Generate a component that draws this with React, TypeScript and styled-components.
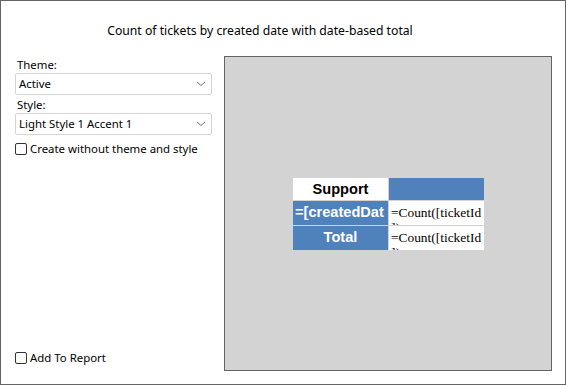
import styled, { createGlobalStyle } from 'styled-components';

const GlobalStyle = createGlobalStyle`
  html, body {
    margin: 0;
    padding: 0;
    background: #ffffff;
  }
  * {
    box-sizing: border-box;
  }
`;

const Frame = styled.div`
  width: 566px;
  height: 385px;
  border: 1px solid #646464;
  background: #ffffff;
  display: flex;
  flex-direction: column;
  font-family: "Noto Sans", "Open Sans", sans-serif;
  color: #000000;
`;

const Title = styled.div`
  height: 55px;
  padding: 21px 46px 0 0;
  text-align: center;
  font-size: 12.2px;
  line-height: 18px;
`;

const Body = styled.div`
  flex: 1;
  display: grid;
  grid-template-columns: 198px 328px;
  column-gap: 12px;
  padding: 0 13px 13px 13px;
`;

const Options = styled.div`
  display: flex;
  flex-direction: column;
  font-size: 11.4px;
  padding: 1px 0 5px;
`;

const Label = styled.div<{ $gap?: number }>`
  margin-top: ${({ $gap }) => $gap ?? 0}px;
  padding-left: 3px;
  line-height: 16px;
  height: 16px;
`;

const Select = styled.div`
  height: 22px;
  margin-left: 1px;
  border: 1px solid #d4d4d4;
  border-radius: 2px;
  background: #ffffff;
  display: flex;
  align-items: center;
  justify-content: space-between;
  padding: 0 5px 0 3px;
  line-height: 18px;
`;

const Chevron = () => (
  <svg width="10" height="6" viewBox="0 0 10 6">
    <path d="M1 1 L5 4.5 L9 1" fill="none" stroke="#777" strokeWidth="1" />
  </svg>
);

const CheckRow = styled.label<{ $push?: boolean }>`
  display: flex;
  align-items: center;
  gap: 3px;
  margin-top: ${({ $push }) => ($push ? 'auto' : '6px')};
  line-height: 16px;
`;

const Box = styled.span`
  width: 12px;
  height: 12px;
  margin-left: 1px;
  border: 1px solid #333333;
  border-radius: 2px;
  background: #ffffff;
`;

const Preview = styled.div`
  border: 1px solid #646464;
  background: #d3d3d3;
  display: flex;
  align-items: center;
  justify-content: center;
`;

const Table = styled.div`
  display: grid;
  grid-template-columns: 95px 95px;
  grid-template-rows: 22px 24px 24px;
  gap: 1px;
  background: #d3d3d3;
  margin-left: 1px;
`;

const HeadCell = styled.div<{ $fill?: boolean; $left?: boolean }>`
  background: ${({ $fill }) => ($fill ? '#4f81bd' : '#ffffff')};
  color: ${({ $fill }) => ($fill ? '#ffffff' : '#000000')};
  font-family: "Liberation Sans", Arial, sans-serif;
  font-weight: bold;
  font-size: 14.6px;
  line-height: 23px;
  text-align: ${({ $left }) => ($left ? 'left' : 'center')};
  padding-left: ${({ $left }) => ($left ? '2px' : '0')};
  word-break: break-all;
  overflow: hidden;
`;

const ValueCell = styled.div`
  background: #ffffff;
  font-family: "Liberation Serif", "Times New Roman", serif;
  font-size: 13.4px;
  line-height: 15px;
  padding: 4px 0 0 2px;
  white-space: nowrap;
  overflow: hidden;
`;

const Line = styled.div`
  display: block;
`;

export default function App() {
  return (
    <>
      <GlobalStyle />
      <Frame>
        <Title>Count of tickets by created date with date-based total</Title>
        <Body>
          <Options>
            <Label>Theme:</Label>
            <Select>
              <span>Active</span>
              <Chevron />
            </Select>
            <Label $gap={2}>Style:</Label>
            <Select>
              <span>Light Style 1 Accent 1</span>
              <Chevron />
            </Select>
            <CheckRow>
              <Box />
              <span>Create without theme and style</span>
            </CheckRow>
            <CheckRow $push>
              <Box />
              <span>Add To Report</span>
            </CheckRow>
          </Options>
          <Preview>
            <Table>
              <HeadCell>Support</HeadCell>
              <HeadCell $fill />
              <HeadCell $fill $left>=[createdDate]</HeadCell>
              <ValueCell>
                <Line>=Count([ticketId</Line>
                <Line>])</Line>
              </ValueCell>
              <HeadCell $fill>Total</HeadCell>
              <ValueCell>
                <Line>=Count([ticketId</Line>
                <Line>])</Line>
              </ValueCell>
            </Table>
          </Preview>
        </Body>
      </Frame>
    </>
  );
}
